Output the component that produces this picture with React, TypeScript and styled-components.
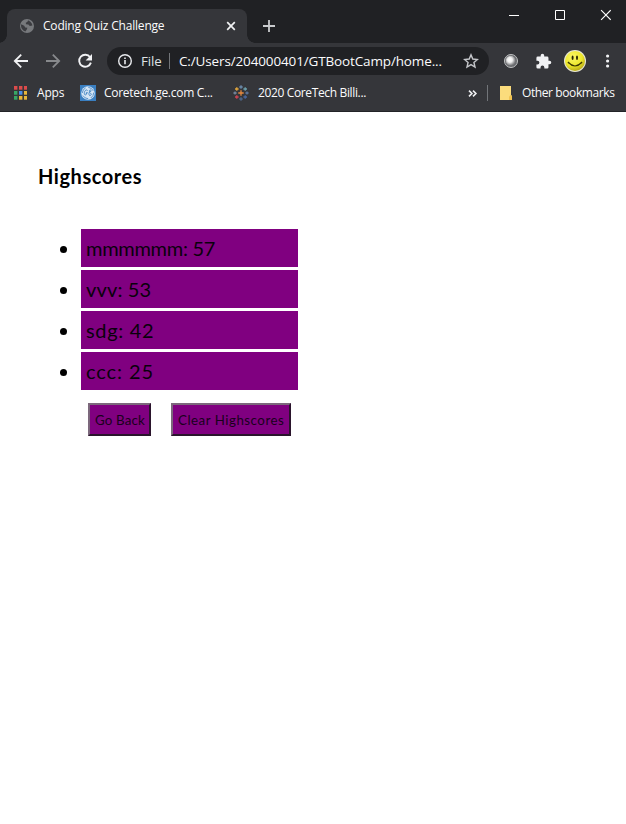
import React from 'react';
import styled, { createGlobalStyle } from 'styled-components';

const GlobalStyle = createGlobalStyle`
  * { box-sizing: border-box; }
  html, body { margin: 0; background: #fff; }
  svg { display: block; flex: none; }
`;

const Browser = styled.div`
  display: flex;
  flex-direction: column;
  width: 626px;
  height: 824px;
  overflow: hidden;
  background: #fff;
  font-family: 'Segoe UI', 'Open Sans', sans-serif;
  color: #fbfbfc;
`;

const TabStrip = styled.header`
  display: flex;
  height: 43px;
  background: #202124;
`;

const Tab = styled.div`
  position: relative;
  display: flex;
  align-items: center;
  width: 240px;
  height: 34px;
  margin: 9px 0 0 7px;
  padding: 0 10px 0 13px;
  border-radius: 8px 8px 0 0;
  background: #35363a;
  &::before, &::after {
    content: '';
    position: absolute;
    bottom: 0;
    width: 8px;
    height: 8px;
  }
  &::before { left: -8px; background: radial-gradient(circle at 0 0, transparent 7.5px, #35363a 8px); }
  &::after { right: -8px; background: radial-gradient(circle at 100% 0, transparent 7.5px, #35363a 8px); }
`;

const Label = styled.span<{ $track?: number; $size?: number }>`
  font-size: ${p => p.$size ?? 12}px;
  line-height: 18px;
  letter-spacing: ${p => p.$track ?? 0}px;
  white-space: nowrap;
`;

const TabTitle = styled(Label)`
  flex: 1;
  margin-left: 9px;
`;

const NewTab = styled.div`
  margin: 20px 0 0 16px;
`;

const WindowControls = styled.div`
  display: flex;
  gap: 35px;
  margin: 9px 15px 0 auto;
`;

const Toolbar = styled.div`
  display: flex;
  align-items: center;
  height: 36px;
  padding: 0 11px 0 12px;
  background: #35363a;
`;

const NavButtons = styled.div`
  display: flex;
  gap: 14px;
  width: 95px;
`;

const Omnibox = styled.div`
  display: flex;
  align-items: center;
  width: 382px;
  height: 28px;
  padding: 0 10px;
  border-radius: 14px;
  background: #202124;
`;

const Scheme = styled(Label)`
  width: 28px;
  margin-left: 8px;
  color: #dfe1e4;
`;

const Address = styled(Label)`
  flex: 1;
  margin-left: 9px;
`;

const Rule = styled.i`
  width: 1px;
  height: 16px;
  background: #727579;
`;

const Extensions = styled.div`
  display: grid;
  grid-template-columns: 31px 29px 41px 6px;
  align-items: center;
  margin-left: 15px;
`;

const BookmarkBar = styled.nav`
  display: flex;
  align-items: center;
  height: 33px;
  padding: 0 0 4px 13px;
  border-bottom: 1px solid #222327;
  background: #35363a;
`;

const Bookmark = styled.div<{ $width: number; $gap: number }>`
  display: flex;
  align-items: center;
  flex: none;
  gap: ${p => p.$gap}px;
  width: ${p => p.$width}px;
`;

const Overflow = styled.div`
  margin: 0 9px 0 auto;
`;

const Folder = styled.div`
  display: flex;
  align-items: center;
  gap: 10px;
  width: 126px;
  margin-left: 12px;
`;

const Page = styled.main`
  padding: 50px 38px 0;
  color: #000;
  font-family: 'Comic Sans MS', Lato, sans-serif;
`;

const Title = styled.h1`
  margin: 0;
  font-size: 20px;
  line-height: 28px;
  letter-spacing: 0.55px;
`;

const Scores = styled.ul`
  display: grid;
  gap: 3px;
  width: 243px;
  margin: 39px 0 0 17px;
  padding: 0;
  list-style: none;
`;

const ScoreRow = styled.li`
  display: flex;
  align-items: center;
  gap: 14px;
  padding-left: 5px;
  &::before {
    content: '';
    width: 7px;
    height: 7px;
    border-radius: 50%;
    background: #000;
    transform: translateY(1px);
  }
`;

const Score = styled.div<{ $track: number }>`
  width: 217px;
  height: 38px;
  padding-left: 5px;
  background: #800080;
  color: #0a000c;
  font-size: 20px;
  line-height: 39px;
  letter-spacing: ${p => p.$track}px;
`;

const Actions = styled.div`
  display: flex;
  gap: 20px;
  margin: 13px 0 0 50px;
`;

const ActionButton = styled.button<{ $width: number; $track: number }>`
  width: ${p => p.$width}px;
  height: 33px;
  padding: 0 0 0 5px;
  border: 2px solid;
  border-color: #7c687c #2a142c #2a142c #7c687c;
  background: #800080;
  color: #19001c;
  font-family: inherit;
  font-size: 13.33px;
  line-height: 30px;
  letter-spacing: ${p => p.$track}px;
  text-align: left;
  white-space: nowrap;
`;

const scores = [
  { name: 'mmmmmm', score: 57, track: -0.3 },
  { name: 'vvv', score: 53, track: 0.15 },
  { name: 'sdg', score: 42, track: 0.65 },
  { name: 'ccc', score: 25, track: 0.9 },
];

const GlobeIcon = () => (
  <svg width="14" height="14" viewBox="0 0 14 14">
    <circle cx="7" cy="7" r="7" fill="#77797c" />
    <path d="M1.2 5.2 4.2 6.8 5.2 8.4 7.4 8.8 6.8 10.6 5.4 12.4A6 6 0 0 1 1.2 5.2M6.2 1.3 8.2 1.6 7.2 3 5.8 3.7 6 5.2 8.4 5.4 9.8 6.9 12.4 6.5A5.8 5.8 0 0 0 6.2 1.3" fill="#3b3c40" />
  </svg>
);

const appColors = ['#dc4b4b', '#dc4b4b', '#dc4b4b', '#37a765', '#4a8de8', '#e7b63a', '#37a765', '#e7b63a', '#e7b63a'];
const AppsIcon = () => (
  <svg width="14" height="14" viewBox="0 0 14 14">
    {appColors.map((c, i) => (
      <rect key={i} x={1 + (i % 3) * 5} y={Math.floor(i / 3) * 5} width="3.4" height="3.7" fill={c} />
    ))}
  </svg>
);

const MonogramIcon = () => (
  <svg width="16" height="16" viewBox="0 0 16 16">
    <rect width="16" height="16" fill="#3a7fc1" />
    <circle cx="8" cy="8" r="6.8" fill="#d6e6f5" />
    <g fill="none" stroke="#3a7fc1" strokeLinecap="round">
      <circle cx="8" cy="8" r="5.7" strokeWidth=".8" strokeDasharray="5.5 3.45" />
      <path d="M7.4 5.4C6.7 4 4.9 5.2 4.4 7.4 3.9 9.6 5.2 10.6 6.3 9.4L7.3 7.4C6.3 7.1 5.7 8.2 6.4 8.8M11.2 5.3C10.2 4.2 8.7 5.6 9.4 6.5 9.9 7.1 10.9 6.7 10.7 6 8.7 6.8 8.3 10.3 9.8 10.6 11.4 10.7 12 8.3 10.6 8.3" strokeWidth=".9" />
    </g>
  </svg>
);

const plusMarks: [number, number, number, string][] = [
  [8, 8, 2.7, '#e98b3e'],
  [8, 2, 1.7, '#6b8bab'],
  [8, 14, 1.7, '#4f678a'],
  [2, 8, 1.6, '#77889e'],
  [14, 8, 1.6, '#5d78a0'],
  [3.8, 4, 1.8, '#e0a53c'],
  [12.2, 4, 1.8, '#6ba0ad'],
  [3.8, 12, 1.8, '#cf4452'],
  [12.2, 12, 1.8, '#4867a0'],
];
const BurstIcon = () => (
  <svg width="16" height="16" viewBox="0 0 16 16">
    {plusMarks.map(([x, y, r, c]) => (
      <path key={`${x}-${y}`} d={`M${x - r} ${y}H${x + r}M${x} ${y - r}V${y + r}`} stroke={c} strokeWidth="1.3" />
    ))}
  </svg>
);

const SmileyIcon = () => (
  <svg width="22" height="22" viewBox="0 0 22 22">
    <defs>
      <radialGradient id="face" cx="40%" cy="30%" r="70%">
        <stop offset="0" stopColor="#fbf768" />
        <stop offset=".65" stopColor="#ece72a" />
        <stop offset="1" stopColor="#bcae17" />
      </radialGradient>
    </defs>
    <circle cx="11" cy="11" r="11" fill="#e8e7d2" />
    <circle cx="11" cy="11" r="10" fill="url(#face)" />
    <ellipse cx="8.6" cy="7.8" rx="1" ry="2.3" fill="#282500" />
    <ellipse cx="13" cy="7.8" rx="1" ry="2.3" fill="#282500" />
    <path d="M4.4 12.5Q11 19.5 17.6 12.5M3.8 13l1.3-.9M16.9 12.1l1.3.9" fill="none" stroke="#393500" strokeWidth="1.2" />
  </svg>
);

const OrbIcon = () => (
  <svg width="14" height="14" viewBox="0 0 14 14">
    <defs>
      <radialGradient id="orb" cx="42%" cy="42%" r="55%">
        <stop offset="0" stopColor="#fff" />
        <stop offset=".45" stopColor="#eee" />
        <stop offset="1" stopColor="#77787b" />
      </radialGradient>
    </defs>
    <circle cx="7" cy="7" r="6.5" fill="#66686b" stroke="#bfc0c2" />
    <circle cx="6.7" cy="6.7" r="5" fill="url(#orb)" />
  </svg>
);

export default function App() {
  return (
    <>
      <GlobalStyle />
      <Browser>
        <TabStrip>
          <Tab>
            <GlobeIcon />
            <TabTitle $track={-0.2}>Coding Quiz Challenge</TabTitle>
            <svg width="12" height="12" viewBox="0 0 12 12" stroke="#f1f2f3" strokeWidth="1.7">
              <path d="m2.2 2.2 7.6 7.6m0-7.6-7.6 7.6" />
            </svg>
          </Tab>
          <NewTab>
            <svg width="12" height="12" viewBox="0 0 12 12" stroke="#c9cbce" strokeWidth="1.8">
              <path d="M0 6h12M6 0v12" />
            </svg>
          </NewTab>
          <WindowControls>
            <svg width="11" height="12" viewBox="0 0 11 12" stroke="#fff">
              <path d="M1 6.5h10" />
            </svg>
            <svg width="11" height="12" viewBox="0 0 11 12" fill="none" stroke="#fff">
              <path d="M1.5 1.5h9v9h-9z" />
            </svg>
            <svg width="11" height="12" viewBox="0 0 11 12" stroke="#fff" strokeWidth="1.1">
              <path d="m1.1 1.2 9.6 9.6m0-9.6-9.6 9.6" />
            </svg>
          </WindowControls>
        </TabStrip>

        <Toolbar>
          <NavButtons>
            <svg width="18" height="18" viewBox="0 0 18 18" fill="none" stroke="#f1f2f4" strokeWidth="1.8">
              <path d="M16 9H3M9.2 2.6 2.8 9l6.4 6.4" />
            </svg>
            <svg width="18" height="18" viewBox="0 0 18 18" fill="none" stroke="#87898c" strokeWidth="1.8">
              <path d="M2 9h13M8.8 2.6 15.2 9l-6.4 6.4" />
            </svg>
            <svg width="18" height="18" viewBox="0 0 18 18" fill="none">
              <path d="M14.1 5.2A6 6 0 1 0 14.9 10.6" stroke="#f1f2f4" strokeWidth="1.9" />
              <path d="M16 2v6.4H9.6z" fill="#f1f2f4" />
            </svg>
          </NavButtons>
          <Omnibox>
            <svg width="16" height="16" viewBox="0 0 16 16" fill="none" stroke="#e8eaed">
              <circle cx="8" cy="8" r="6.3" strokeWidth="1.4" />
              <path d="M8 7.1v4.2M8 4.5v1.6" strokeWidth="1.6" />
            </svg>
            <Scheme $size={13.3} $track={-0.1}>File</Scheme>
            <Rule />
            <Address $size={13.5} $track={-0.14}>C:/Users/204000401/GTBootCamp/home...</Address>
            <svg width="16" height="16" viewBox="0 0 24 24" fill="none" stroke="#c4c6ca" strokeWidth="2.1">
              <path d="m12 2.8 2.7 6.3 6.9.6-5.2 4.5 1.6 6.8-6-3.6-6 3.6 1.6-6.8-5.2-4.5 6.9-.6z" />
            </svg>
          </Omnibox>
          <Extensions>
            <OrbIcon />
            <svg width="17" height="17" viewBox="0 0 24 24" fill="#f1f2f4">
              <path d="M20.5 11H19V7a2 2 0 0 0-2-2h-4V3.5a2.5 2.5 0 0 0-5 0V5H4a2 2 0 0 0-2 2v3.8h1.5a2.7 2.7 0 0 1 0 5.4H2V20a2 2 0 0 0 2 2h3.8v-1.5a2.7 2.7 0 0 1 5.4 0V22H17a2 2 0 0 0 2-2v-4h1.5a2.5 2.5 0 0 0 0-5" />
            </svg>
            <SmileyIcon />
            <svg width="6" height="14" viewBox="0 0 6 14" fill="#f1f2f4">
              <circle cx="2.6" cy="2" r="1.6" /><circle cx="2.6" cy="7" r="1.6" /><circle cx="2.6" cy="12" r="1.6" />
            </svg>
          </Extensions>
        </Toolbar>

        <BookmarkBar>
          <Bookmark $width={67} $gap={10}>
            <AppsIcon /><Label $track={-0.2}>Apps</Label>
          </Bookmark>
          <Bookmark $width={153} $gap={8}>
            <MonogramIcon /><Label $track={-0.28}>Coretech.ge.com C...</Label>
          </Bookmark>
          <Bookmark $width={138} $gap={9}>
            <BurstIcon /><Label $track={-0.36}>2020 CoreTech Billi...</Label>
          </Bookmark>
          <Overflow>
            <svg width="10" height="9" viewBox="0 0 10 9" fill="none" stroke="#eeeff1" strokeWidth="1.6">
              <path d="m1 1.6 2.9 2.9L1 7.4M5 1.6l2.9 2.9L5 7.4" />
            </svg>
          </Overflow>
          <Rule />
          <Folder>
            <svg width="12" height="14" viewBox="0 0 12 14">
              <path d="M0 0h11v9l1 1v4H0z" fill="#fbdc7c" />
              <path d="M9 14v-3.5l1.5-1.5L12 10v4z" fill="#f0c251" />
            </svg>
            <Label $track={-0.4}>Other bookmarks</Label>
          </Folder>
        </BookmarkBar>

        <Page>
          <Title>Highscores</Title>
          <Scores>
            {scores.map(s => (
              <ScoreRow key={s.name}>
                <Score $track={s.track}>{`${s.name}: ${s.score}`}</Score>
              </ScoreRow>
            ))}
          </Scores>
          <Actions>
            <ActionButton $width={63} $track={0.15}>Go Back</ActionButton>
            <ActionButton $width={120} $track={0.5}>Clear Highscores</ActionButton>
          </Actions>
        </Page>
      </Browser>
    </>
  );
}
